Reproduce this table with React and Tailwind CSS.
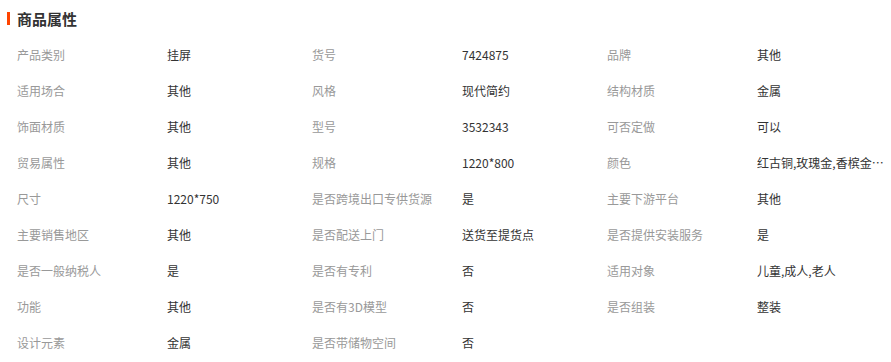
import React from 'react'

const rows = [
    [['产品类别', '挂屏'], ['货号', '7424875'], ['品牌', '其他']],
    [['适用场合', '其他'], ['风格', '现代简约'], ['结构材质', '金属']],
    [['饰面材质', '其他'], ['型号', '3532343'], ['可否定做', '可以']],
    [['贸易属性', '其他'], ['规格', '1220*800'], ['颜色', '红古铜,玫瑰金,香槟金,银色']],
    [['尺寸', '1220*750'], ['是否跨境出口专供货源', '是'], ['主要下游平台', '其他']],
    [['主要销售地区', '其他'], ['是否配送上门', '送货至提货点'], ['是否提供安装服务', '是']],
    [['是否一般纳税人', '是'], ['是否有专利', '否'], ['适用对象', '儿童,成人,老人']],
    [['功能', '其他'], ['是否有3D模型', '否'], ['是否组装', '整装']],
    [['设计元素', '金属'], ['是否带储物空间', '否']],
]

export default function App(){
    return(
    <div className="w-[891px] h-[362px] bg-white overflow-hidden font-['Microsoft_YaHei','Noto_Sans_CJK_SC',sans-serif]">
        <div className="flex items-center h-[37px] pl-[7px]">
            <span className="w-[3px] h-[13px] bg-[#ff4400]"></span>
            <h2 className="ml-[7px] text-[15px] font-bold text-[#333] leading-none">商品属性</h2>
        </div>
        <div className="pl-[17px]">
            {rows.map((row, i) => (
                <div key={i} className="flex h-[36px] items-center text-[12px]">
                    {row.map(([k, v], j) => (
                        <div key={j} className="flex w-[295px] shrink-0">
                            <div className="w-[150px] text-[#999]">{k}</div>
                            <div className="w-[128px] text-[#333] truncate">{v}</div>
                        </div>
                    ))}
                </div>
            ))}
        </div>
    </div>
    )
}
